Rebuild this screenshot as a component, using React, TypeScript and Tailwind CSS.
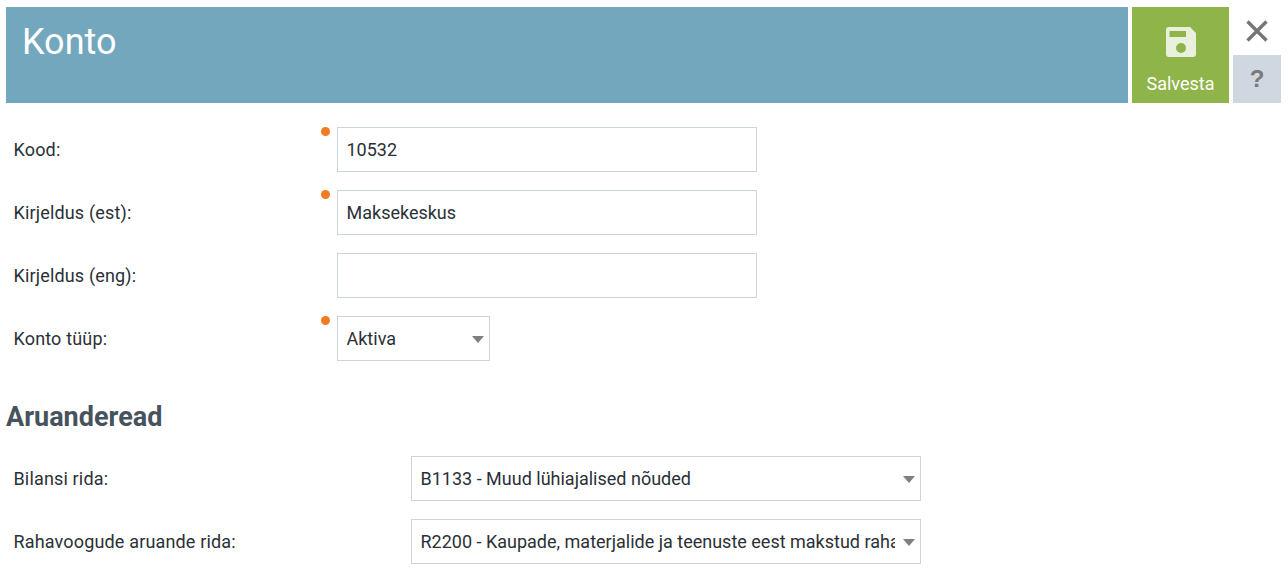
import React from 'react';

const Required = () => (
  <span className="absolute left-[-16px] top-0 h-[9px] w-[9px] rounded-full bg-[#f47b20]" />
);

const Caret = () => (
  <svg className="absolute right-[5px] top-[19px]" width="12" height="7" viewBox="0 0 12 7">
    <path d="M0 0h12L6 7z" fill="#7f7f7f" />
  </svg>
);

const Label: React.FC<{ text: string; className: string }> = ({ text, className }) => (
  <label className={`pl-[7.5px] tracking-[0.16px] ${className}`}>{text}</label>
);

const Field: React.FC<{ label: string; value?: string; required?: boolean }> = ({ label, value, required }) => (
  <div className="flex h-[45px] items-center">
    <Label text={label} className="w-[331px]" />
    <div className="relative">
      {required && <Required />}
      <input
        readOnly
        value={value ?? ''}
        className="block h-[45px] w-[420px] border border-[#ced4dc] bg-white px-[8.5px] text-[#2a3036] outline-none"
      />
    </div>
  </div>
);

const SelectBox: React.FC<{ value: string; className: string }> = ({ value, className }) => (
  <div className={`relative flex h-[45px] items-center border border-[#ced4dc] bg-white pl-[8.5px] ${className}`}>
    <span className="block overflow-hidden whitespace-nowrap">{value}</span>
    <Caret />
  </div>
);

const ReportRow: React.FC<{ label: string; value: string }> = ({ label, value }) => (
  <div className="flex h-[45px] items-center">
    <Label text={label} className="w-[405px]" />
    <SelectBox value={value} className="w-[510px] pr-[25px]" />
  </div>
);

export default function App() {
  return (
    <div className="min-h-[577px] bg-white px-[6px] pt-[7px] font-['Roboto',sans-serif] text-[18px] text-[#2a3036]">
      {/* Header */}
      <header className="flex h-[96px] gap-1">
        <div className="w-[1122px] bg-[#73a7bd] pl-[16px] pt-[10px] text-[36px] leading-[50px] text-white">Konto</div>
        <button className="flex w-[97px] flex-col items-center bg-[#8fb449] pt-[20px] text-white">
          <svg width="30" height="30" viewBox="0 0 30 30">
            <path
              fillRule="evenodd"
              fill="#e9f0db"
              d="M3 0h21l6 6v21a3 3 0 0 1-3 3H3a3 3 0 0 1-3-3V3a3 3 0 0 1 3-3zM3.500 4v6H20V4zM15 16a5 5 0 1 0 0 10a5 5 0 0 0 0-10z"
            />
          </svg>
          <span className="mt-[15px] leading-[24px]">Salvesta</span>
        </button>
        <div className="flex w-[48px] flex-col">
          <button className="flex h-[48px] items-center justify-center">
            <svg width="24" height="24" viewBox="0 0 24 24">
              <path d="M2.500 2.500l19 19M21.500 2.500l-19 19" stroke="#757575" strokeWidth="3.400" fill="none" />
            </svg>
          </button>
          <button className="flex h-[48px] items-center justify-center bg-[#cfd7e0] font-['Liberation_Sans',sans-serif] text-[24px] font-bold text-[#7a7a7a]">?</button>
        </div>
      </header>

      {/* Konto fields */}
      <div className="mt-[24px] flex flex-col gap-[18px]">
        <Field label="Kood:" value="10532" required />
        <Field label="Kirjeldus (est):" value="Maksekeskus" required />
        <Field label="Kirjeldus (eng):" />
        <div className="flex h-[45px] items-center">
          <Label text="Konto tüüp:" className="w-[331px]" />
          <div className="relative">
            <Required />
            <SelectBox value="Aktiva" className="w-[153px]" />
          </div>
        </div>
      </div>

      <h2 className="mt-[38px] text-[27px] font-bold leading-[36px] text-[#46525c]">Aruanderead</h2>

      <div className="mt-[21px] flex flex-col gap-[18px]">
        <ReportRow label="Bilansi rida:" value="B1133 - Muud lühiajalised nõuded" />
        <ReportRow label="Rahavoogude aruande rida:" value="R2200 - Kaupade, materjalide ja teenuste eest makstud raha" />
      </div>
    </div>
  );
}
